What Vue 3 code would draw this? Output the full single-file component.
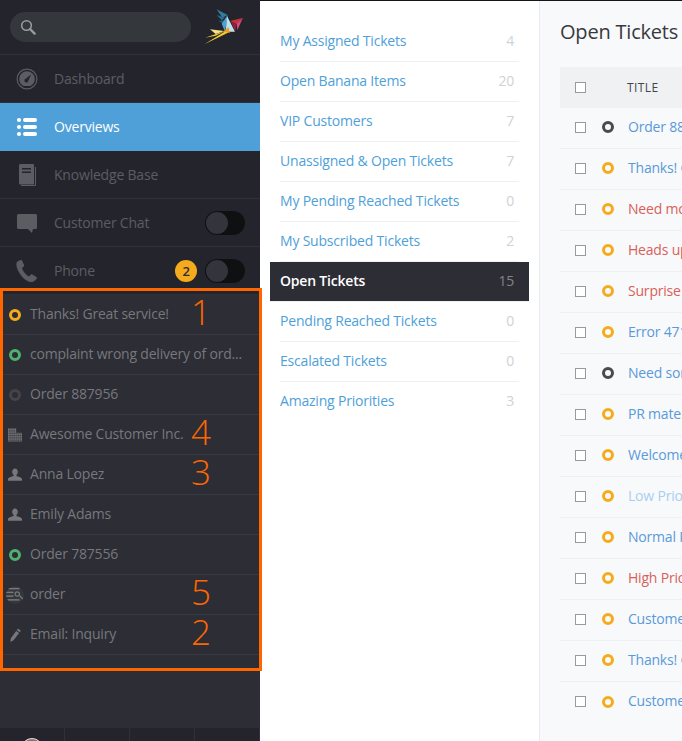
<template>
  <div class="app">
    <div class="top-edge"></div>
    <aside class="sidebar">
      <div class="nav-top">
        <div class="search-row">
          <div class="search">
            <svg class="search-icon" viewBox="0 0 16 16">
              <circle cx="6.5" cy="6.5" r="4.8" fill="none" stroke="#9a9c9c" stroke-width="1.6" />
              <path d="M10 10l4.600 4.600" stroke="#9a9c9c" stroke-width="2.4" stroke-linecap="round" />
            </svg>
          </div>
          <svg class="logo" viewBox="27 24 120 111">
            <polygon points="65,25 98,42 82,50" fill="#2f7d9e" />
            <polygon points="65,42 90,50 80,58" fill="#2b6d8c" />
            <polygon points="70,60 88,58 85,68" fill="#1f5c78" />
            <polygon points="98,42 80,68 90,92" fill="#4ba3d0" />
            <polygon points="96,45 120,92 92,92" fill="#bfe0ee" />
            <polygon points="105,60 145,50 125,70" fill="#c5303f" />
            <polygon points="125,68 143,52 127,88" fill="#d8477f" />
            <polygon points="108,62 125,70 120,92" fill="#8a2436" />
            <polygon points="45,85 88,90 62,99" fill="#f7e08a" />
            <polygon points="30,110 90,90 62,104" fill="#f7d13a" />
            <polygon points="28,130 92,90 102,94" fill="#f7c92e" />
            <polygon points="85,92 100,78 105,95" fill="#efa01f" />
          </svg>
        </div>
        <div
          v-for="item in navItems"
          :key="item.label"
          class="nav-item"
          :class="{ active: item.active }"
        >
          <svg class="nav-icon" viewBox="0 0 24 24" v-html="item.icon"></svg>
          <span class="nav-label">{{ item.label }}</span>
          <span v-if="item.badge" class="badge">{{ item.badge }}</span>
          <span v-if="item.toggle" class="toggle"><span class="knob"></span></span>
        </div>
      </div>

      <div class="tasks">
        <div v-for="task in tasks" :key="task.label" class="task">
          <span class="task-icon">
            <span v-if="task.dot" class="dot" :class="task.dot"></span>
            <svg v-else :class="task.icon" viewBox="0 0 24 24" v-html="taskIcons[task.icon]"></svg>
          </span>
          <span class="task-label">{{ task.label }}</span>
        </div>
      </div>

      <div class="user-bar">
        <div class="user-cell"><span class="avatar"></span></div>
        <div class="user-cell"></div>
        <div class="user-cell"></div>
        <div class="user-cell"></div>
      </div>

      <div class="marker-box">
        <span v-for="m in markers" :key="m" class="marker" :class="'m' + m">{{ m }}</span>
      </div>
    </aside>

    <section class="overviews">
      <div
        v-for="o in overviews"
        :key="o.label"
        class="overview"
        :class="{ selected: o.selected }"
      >
        <span class="overview-label">{{ o.label }}</span>
        <span class="overview-count">{{ o.count }}</span>
      </div>
    </section>

    <main class="content">
      <h1 class="title">Open Tickets</h1>
      <div class="table-head">
        <span class="checkbox"></span>
        <span class="col-title">TITLE</span>
      </div>
      <div v-for="(row, index) in rows" :key="index" class="row">
        <span class="checkbox"></span>
        <span class="dot small" :class="row.state"></span>
        <span class="row-text" :class="row.tone">{{ row.text }}</span>
      </div>
    </main>
  </div>
</template>

<script setup>
const navItems = [
  {
    label: 'Dashboard',
    icon: '<path fill="#5b5d63" fill-rule="evenodd" d="M12 1.500a10.500 10.500 0 1 0 0 21 10.500 10.500 0 0 0 0-21zm0 1.200a9.300 9.300 0 1 1 0 18.600 9.300 9.300 0 0 1 0-18.600zM12 4.200a7.800 7.800 0 0 0-7.800 7.800c0 3.100 1.800 5.700 4.400 7h6.800c2.600-1.300 4.400-3.900 4.400-7A7.800 7.800 0 0 0 12 4.200zm4.200 3.100l-2.800 6.200a2 2 0 1 1-2.600-1.800z"/>'
  },
  {
    label: 'Overviews',
    active: true,
    icon: '<g fill="#fff"><circle cx="4" cy="5" r="2.100"/><circle cx="4" cy="12" r="2.100"/><circle cx="4" cy="19" r="2.100"/><rect x="8" y="3" width="14" height="4" rx="2"/><rect x="8" y="10" width="14" height="4" rx="2"/><rect x="8" y="17" width="14" height="4" rx="2"/></g>'
  },
  {
    label: 'Knowledge Base',
    icon: '<path fill="#5b5d63" fill-rule="evenodd" d="M4 2.500C4 1.700 4.700 1 5.500 1H18a1 1 0 0 1 1 1v19.500H5.500C4.700 21.500 4 20.800 4 20zM7 5v1.500h9V5zM7 8.500V10h9V8.500z"/><path fill="none" stroke="#5b5d63" d="M20.500 4v18.500H6"/>'
  },
  {
    label: 'Customer Chat',
    toggle: true,
    icon: '<path fill="#5b5d63" d="M2 4.500C2 3.700 2.700 3 3.500 3h17c.8 0 1.500.7 1.500 1.500v12c0 .8-.7 1.500-1.500 1.500H18l-1 4-4-4H3.500C2.700 18 2 17.300 2 16.500z"/>'
  },
  {
    label: 'Phone',
    badge: 2,
    toggle: true,
    icon: '<path fill="#5b5d63" d="M5.500 1L2.500 2.500C1 3.500 1 7 3 11.500c2.500 5 6 9 10.500 11 2.500 1 5 .7 7-1.500l1.300-1.500c.3-.6.1-1.200-.4-1.500l-4-2.500c-.6-.3-1.200-.2-1.600.3l-1.800 1.700c-2.500-1-6-5-7-8.500l1.800-1.400c.4-.4.5-1 .3-1.500L7 1.500C6.700 1 6.100.8 5.500 1z"/>'
  }
]

const tasks = [
  { label: 'Thanks! Great service!', dot: 'open' },
  { label: 'complaint wrong delivery of ord...', dot: 'green' },
  { label: 'Order 887956', dot: 'closed' },
  { label: 'Awesome Customer Inc.', icon: 'building' },
  { label: 'Anna Lopez', icon: 'person' },
  { label: 'Emily Adams', icon: 'person' },
  { label: 'Order 787556', dot: 'green' },
  { label: 'order', icon: 'search' },
  { label: 'Email: Inquiry', icon: 'pen' }
]

const taskIcons = {
  building: '<path fill="#77787c" d="M0 1h14v7h10v15H0z"/><path stroke="#2c2d35" stroke-width=".8" d="M0 5h14M0 9h24M0 13h24M0 17h24M0 21h24M3.500 1v22M7 1v22M10.500 1v22M14 8v15M17.500 8v15M21 8v15"/>',
  person: '<path fill="#77787c" d="M12 1c2.900 0 4.800 2.200 4.800 5.500 0 2.600-1.100 4.600-2.400 5.700v1.600c3 .9 9.600 2.700 9.600 5.200v3H0v-3c0-2.500 6.600-4.300 9.600-5.200v-1.600C8.300 11.100 7.200 9.100 7.200 6.500 7.200 3.200 9.100 1 12 1z"/>',
  search: '<g fill="#77787c"><rect x="0" y="2.500" width="18" height="2"/><rect x="0" y="7.500" width="10" height="2"/><rect x="0" y="12.500" width="10" height="2"/><rect x="0" y="17.500" width="18" height="2"/><path fill-rule="evenodd" d="M15 7a3.700 3.700 0 1 0 0 7.400A3.700 3.700 0 0 0 15 7zm0 1.600a2.100 2.100 0 1 1 0 4.200 2.100 2.100 0 0 1 0-4.200z"/><path d="M17.500 13.500l1.200-1.200 4.800 4.800-1.200 1.200z"/></g>',
  pen: '<path fill="#77787c" d="M17 1l5 3.500-1.800 2.800-5-3.500zM14 5l5 3.500L9.500 21 4 24l.7-5.800z"/>'
}

const markers = [1, 2, 3, 4, 5]

const overviews = [
  { label: 'My Assigned Tickets', count: 4 },
  { label: 'Open Banana Items', count: 20 },
  { label: 'VIP Customers', count: 7 },
  { label: 'Unassigned & Open Tickets', count: 7 },
  { label: 'My Pending Reached Tickets', count: 0 },
  { label: 'My Subscribed Tickets', count: 2 },
  { label: 'Open Tickets', count: 15, selected: true },
  { label: 'Pending Reached Tickets', count: 0 },
  { label: 'Escalated Tickets', count: 0 },
  { label: 'Amazing Priorities', count: 3 }
]

const rows = [
  { text: 'Order 887956', state: 'dark', tone: 'blue' },
  { text: 'Thanks! Great', state: 'open', tone: 'blue' },
  { text: 'Need more', state: 'open', tone: 'red' },
  { text: 'Heads up', state: 'open', tone: 'red' },
  { text: 'Surprise', state: 'open', tone: 'red' },
  { text: 'Error 4711', state: 'open', tone: 'blue' },
  { text: 'Need some', state: 'dark', tone: 'blue' },
  { text: 'PR material', state: 'open', tone: 'blue' },
  { text: 'Welcome', state: 'open', tone: 'blue' },
  { text: 'Low Priority', state: 'open', tone: 'light' },
  { text: 'Normal Priority', state: 'open', tone: 'blue' },
  { text: 'High Priority', state: 'open', tone: 'red' },
  { text: 'Customer', state: 'open', tone: 'blue' },
  { text: 'Thanks! Great', state: 'open', tone: 'blue' },
  { text: 'Customer', state: 'open', tone: 'blue' }
]
</script>

<style>
html,
body {
  margin: 0;
  padding: 0;
  background: #fff;
  overflow: hidden;
}
</style>

<style scoped>
.app {
  position: relative;
  display: flex;
  width: 682px;
  height: 741px;
  overflow: hidden;
  font-family: "Open Sans", "Noto Sans", sans-serif;
  font-size: 14px;
  letter-spacing: -0.2px;
}

.top-edge {
  position: absolute;
  top: 0;
  left: 0;
  right: 0;
  height: 1px;
  background: #14151a;
}

.sidebar {
  position: relative;
  flex: 0 0 260px;
  display: flex;
  flex-direction: column;
  background: #2c2d35;
}

.nav-top {
  height: 295px;
  overflow: hidden;
  background: #24252c;
}

.search-row {
  display: flex;
  align-items: center;
  height: 54px;
  padding-left: 10px;
  border-bottom: 1px solid #2f3038;
}

.search {
  display: flex;
  align-items: center;
  width: 181px;
  height: 30px;
  border-radius: 15px;
  background: #34373b;
}

.search-icon {
  width: 16px;
  height: 16px;
  margin-left: 10px;
}

.logo {
  width: 40px;
  height: 37px;
  margin-left: 13px;
}

.nav-item {
  display: flex;
  align-items: center;
  height: 47px;
  padding: 0 15px;
  border-bottom: 1px solid #2f3038;
  color: #5b5d63;
}

.nav-item.active {
  height: 48px;
  border-bottom: 0;
  background: #4f9fd9;
  color: #fff;
}

.nav-item.active .nav-label {
  padding-bottom: 2px;
}

.nav-icon {
  flex: none;
  width: 24px;
  height: 24px;
}

.nav-label {
  flex: 1;
  margin-left: 15px;
}

.badge {
  width: 22px;
  height: 22px;
  margin-right: 8px;
  border-radius: 50%;
  background: #f6ab1c;
  color: #2c2d35;
  font-size: 13px;
  font-weight: 600;
  line-height: 22px;
  text-align: center;
}

.toggle {
  display: block;
  width: 40px;
  height: 24px;
  border-radius: 12px;
  background: #0f1012;
}

.knob {
  display: block;
  width: 22px;
  height: 22px;
  margin: 1px;
  border-radius: 50%;
  background: #33343c;
}

.tasks {
  flex: 1;
}

.task {
  display: flex;
  align-items: center;
  height: 39px;
  padding-left: 8px;
  border-bottom: 1px solid #383942;
  color: #77787c;
}

.task-label {
  padding-bottom: 2px;
}

.task-icon {
  display: flex;
  align-items: center;
  justify-content: center;
  width: 14px;
  height: 14px;
  margin-right: 8px;
}

.task-icon svg {
  flex: none;
  width: 14px;
  height: 14px;
}

.task-icon svg.search {
  width: 18px;
  height: 18px;
}

.dot {
  box-sizing: border-box;
  display: block;
  flex: none;
  width: 12px;
  height: 12px;
  border: 3px solid #f6ab1c;
  border-radius: 50%;
}

.dot.green {
  border-color: #4eb16f;
}

.dot.closed {
  border-color: #43454b;
}

.dot.dark {
  border-color: #49494f;
}

.user-bar {
  display: flex;
  height: 13px;
  background: #24252c;
  overflow: hidden;
}

.user-cell {
  box-sizing: border-box;
  width: 65px;
  padding-left: 21px;
  border-right: 1px solid #2f3038;
}

.avatar {
  box-sizing: border-box;
  display: block;
  width: 22px;
  height: 22px;
  margin-top: 10px;
  border: 1px solid #e6e6e6;
  border-radius: 50%;
  background: #8b6f62;
}

/* annotation frame drawn on top of the sidebar */
.marker-box {
  position: absolute;
  top: 288px;
  left: 0;
  box-sizing: border-box;
  width: 262px;
  height: 383px;
  border: 3px solid #ff6600;
}

.marker {
  position: absolute;
  left: 188px;
  color: #ff6600;
  font-size: 35px;
  font-weight: 300;
  line-height: 30px;
}

.m1 { top: 6px; }
.m4 { top: 126px; }
.m3 { top: 166px; }
.m5 { top: 286px; }
.m2 { top: 326px; }

.overviews {
  box-sizing: border-box;
  flex: 0 0 279px;
  padding-top: 22px;
  background: #fff;
}

.overview {
  display: flex;
  justify-content: space-between;
  align-items: center;
  height: 39px;
  margin: 0 20px;
  padding-right: 5px;
  border-bottom: 1px solid #eef0f2;
  color: #4f9fd9;
}

.overview:last-child {
  border-bottom-color: transparent;
}

.overview-label,
.overview-count {
  padding-bottom: 2px;
}

.overview-count {
  color: #cfd2d6;
}

.overview.selected {
  margin: 0 10px;
  padding: 0 15px 0 10px;
  background: #2c2d35;
  background-clip: padding-box;
  color: #fff;
  font-weight: 600;
}

.overview.selected .overview-count {
  color: #83858a;
  font-weight: 400;
}

.content {
  flex: 1;
  min-width: 0;
  padding-left: 20px;
  border-left: 1px solid #e9ebee;
  background: #f8f9fb;
  white-space: nowrap;
  overflow: hidden;
}

.title {
  margin: 16px 0 0;
  color: #38393f;
  font-size: 20px;
  font-weight: 400;
  line-height: 32px;
}

.table-head {
  box-sizing: border-box;
  display: flex;
  align-items: center;
  height: 41px;
  margin-top: 19px;
  padding: 0 0 1px 15px;
  background: #f0f1f3;
}

.checkbox {
  box-sizing: border-box;
  flex: none;
  width: 11px;
  height: 11px;
  border: 1px solid #9a9a9a;
  background: #fff;
}

.col-title {
  margin-left: 41px;
  color: #44454b;
  font-size: 12px;
  letter-spacing: 0.4px;
}

.row {
  box-sizing: border-box;
  display: flex;
  align-items: center;
  height: 41px;
  padding: 0 0 2px 15px;
  border-bottom: 1px solid #eef0f2;
}

.row:last-child {
  border-bottom: 0;
}

.dot.small {
  margin-left: 16px;
}

.row-text {
  margin-left: 14px;
  padding-bottom: 2px;
}

.row-text.blue { color: #5a9ad9; }
.row-text.red { color: #d9605a; }
.row-text.light { color: #a9cfee; }
</style>
